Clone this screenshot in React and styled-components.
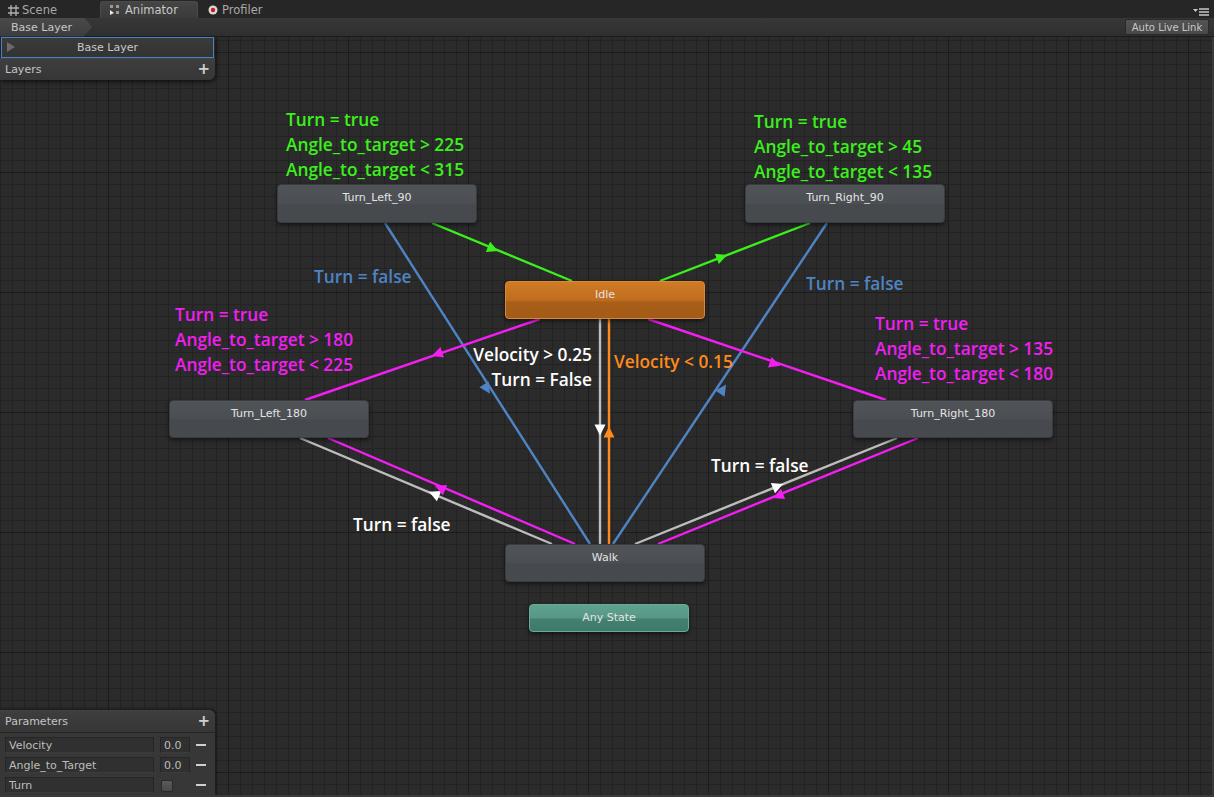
import React from "react"
import styled, { createGlobalStyle } from "styled-components"

const TOP = 37

const GlobalStyle = createGlobalStyle`
  html, body { margin: 0; padding: 0; background: #2a2a2a; overflow: hidden; }
  * { box-sizing: border-box; }
`

const Window = styled.div`
  width: 1214px;
  height: 797px;
  display: flex;
  flex-direction: column;
  font-family: "DejaVu Sans", Verdana, sans-serif;
  font-size: 11px;
  color: #c4c4c4;
`

const TabBar = styled.div`
  height: 18px;
  background: #262626;
  display: flex;
  align-items: flex-end;
  position: relative;
  padding-left: 4px;
`

const Tab = styled.div`
  height: 17px;
  width: ${p => p.$w}px;
  display: flex;
  align-items: center;
  gap: ${p => p.$gap}px;
  padding-left: ${p => p.$pad}px;
  color: ${p => (p.$active ? "#c8c8c8" : "#a8a8a8")};
  background: ${p => (p.$active ? "linear-gradient(#454545, #3a3a3a)" : "transparent")};
  border-radius: 3px 3px 0 0;
  border: 1px solid ${p => (p.$active ? "#4a4a4a" : "transparent")};
  border-bottom: none;
  font-size: 11.5px;
`

const MenuIcon = styled.div`
  position: absolute;
  right: 4px;
  top: 8px;
  display: flex;
  align-items: center;
  gap: 1px;
`

const Toolbar = styled.div`
  height: 19px;
  background: linear-gradient(#373737, #2f2f2f);
  border-bottom: 1px solid #1b1b1b;
  display: flex;
  align-items: center;
  justify-content: space-between;
`

const Crumb = styled.div`
  height: 19px;
  width: 92px;
  padding-left: 11px;
  display: flex;
  align-items: center;
  background: linear-gradient(#4a4a4a, #3c3c3c);
  clip-path: polygon(0 0, 84px 0, 92px 50%, 84px 100%, 0 100%);
  color: #c8c8c8;
`

const LiveLink = styled.div`
  height: 16px;
  width: 84px;
  margin-right: 5px;
  display: flex;
  align-items: center;
  justify-content: center;
  background: linear-gradient(#545454, #484848);
  border: 1px solid #2a2a2a;
  border-radius: 2px;
  color: #c8c8c8;
  font-size: 10px;
`

const Canvas = styled.div`
  flex: 1;
  position: relative;
  overflow: hidden;
  background-color: #2b2b2b;
  background-image:
    linear-gradient(to right, #1c1c1c 1px, transparent 1px),
    linear-gradient(to bottom, #1c1c1c 1px, transparent 1px),
    linear-gradient(to right, #232323 1px, transparent 1px),
    linear-gradient(to bottom, #232323 1px, transparent 1px);
  background-size: 120px 100%, 100% 120px, 12px 100%, 100% 12px;
  background-position: 108px 0, 0 15px, 0 0, 0 3px;
  border-right: 2px solid #3a3a3a;
  border-bottom: 2px solid #3a3a3a;
`

const Edges = styled.svg`
  position: absolute;
  left: 0;
  top: 0;
  width: 1214px;
  height: 760px;
`

const Node = styled.div`
  position: absolute;
  left: ${p => p.$x}px;
  top: ${p => p.$y - TOP}px;
  width: ${p => p.$w}px;
  height: ${p => p.$h}px;
  border-radius: 4px;
  border: 1px solid ${p => p.$border};
  background: ${p => p.$bg};
  box-shadow: 0 2px 4px rgba(0, 0, 0, 0.55);
  display: flex;
  justify-content: center;
  align-items: ${p => (p.$center ? "center" : "flex-start")};
  padding-top: ${p => (p.$center ? 0 : 6)}px;
  color: #e4e4e4;
  font-size: 11px;
  line-height: 14px;
`

const Label = styled.div`
  position: absolute;
  left: ${p => (p.$right ? "auto" : `${p.$x}px`)};
  right: ${p => (p.$right ? `${1214 - p.$x}px` : "auto")};
  top: ${p => p.$y - TOP}px;
  color: ${p => p.$color};
  font-family: "Open Sans", "Noto Sans", sans-serif;
  font-weight: 600;
  font-size: 17.3px;
  line-height: 25px;
  text-align: ${p => (p.$right ? "right" : "left")};
  white-space: nowrap;
`

const LayersPanel = styled.div`
  position: absolute;
  left: 0;
  top: 0;
  width: 215px;
  box-shadow: 1px 2px 4px rgba(0, 0, 0, 0.6);
  border-radius: 0 0 6px 0;
`

const ActiveLayer = styled.div`
  height: 21px;
  margin: 0 1px;
  border: 1px solid #4a80c4;
  background: linear-gradient(#3a3a3a, #333);
  display: flex;
  align-items: center;
  justify-content: center;
  position: relative;
  color: #c8c8c8;
`

const Triangle = styled.span`
  position: absolute;
  left: 5px;
  top: 4px;
  width: 0;
  height: 0;
  border-top: 5px solid transparent;
  border-bottom: 5px solid transparent;
  border-left: 8px solid #6a6a6a;
`

const PanelHeader = styled.div`
  height: ${p => p.$h}px;
  display: flex;
  align-items: center;
  justify-content: space-between;
  padding: 0 5px;
  background: linear-gradient(#3e3e3e, #363636);
  border-radius: ${p => p.$radius};
  border-top: 1px solid #444;
  color: #c4c4c4;
`

const Plus = styled.span`
  color: #d0d0d0;
  font-size: 15px;
  font-weight: bold;
  line-height: 1;
`

const ParamsPanel = styled.div`
  position: absolute;
  left: 0;
  bottom: 0;
  width: 215px;
  background: #373737;
  border-radius: 0 6px 0 0;
  box-shadow: 1px -1px 3px rgba(0, 0, 0, 0.5);
`

const ParamList = styled.div`
  border-top: 1px solid #262626;
  padding: 4px 0 2px 5px;
  display: flex;
  flex-direction: column;
  gap: 4px;
`

const ParamRow = styled.div`
  display: flex;
  align-items: center;
  height: 16px;
`

const Field = styled.div`
  width: ${p => p.$w}px;
  height: 16px;
  margin-right: ${p => p.$mr}px;
  background: #303030;
  border: 1px solid #262626;
  border-bottom-color: #3c3c3c;
  padding-left: 3px;
  display: flex;
  align-items: center;
  color: #bdbdbd;
`

const CheckBox = styled.div`
  width: 12px;
  height: 12px;
  margin: 2px 23px 0 1px;
  border-radius: 2px;
  background: linear-gradient(#5a5a5a, #4a4a4a);
  border: 1px solid #2a2a2a;
`

const CheckSlot = styled.div`
  width: 36px;
  display: flex;
`

const Minus = styled.div`
  width: 10px;
  height: 2px;
  background: #cfcfcf;
`

const GREEN = "#3cf01c"
const BLUE = "#4f84c4"
const MAG = "#f21ef2"
const GRAY = "#bdbdbd"
const ORANGE = "#ff8a1c"

const Arrow = ({ x, y, dx, dy, color }) => {
  const l = Math.hypot(dx, dy)
  const ux = dx / l
  const uy = dy / l
  const px = -uy
  const py = ux
  const s = 5.5
  const pts = [
    [x + ux * s, y + uy * s],
    [x - ux * s + px * s, y - uy * s + py * s],
    [x - ux * s - px * s, y - uy * s - py * s],
  ]
  return <polygon points={pts.map(p => p.join(",")).join(" ")} fill={color} />
}

const edges = [
  { a: [432, 223], b: [572, 281], c: GREEN, at: [493, 249], dir: 1 },
  { a: [660, 281], b: [810, 223], c: GREEN, at: [722, 257], dir: 1 },
  { a: [385, 223], b: [590, 544], c: BLUE, at: [487, 389], dir: 1 },
  { a: [613, 544], b: [827, 223], c: BLUE, at: [723, 389], dir: 1 },
  { a: [540, 319], b: [305, 400], c: MAG, at: [437, 354], dir: 1 },
  { a: [648, 319], b: [886, 400], c: MAG, at: [775, 364], dir: 1 },
  { a: [300, 438], b: [552, 544], c: GRAY, at: [434, 494], dir: -1, ac: "#ffffff" },
  { a: [328, 438], b: [575, 544], c: MAG, at: [440, 488], dir: -1 },
  { a: [635, 544], b: [897, 438], c: GRAY, at: [778, 486], dir: 1, ac: "#ffffff" },
  { a: [658, 544], b: [918, 438], c: MAG, at: [778, 496], dir: -1 },
  { a: [600, 319], b: [600, 544], c: GRAY, at: [600, 430], dir: 1, ac: "#ffffff" },
  { a: [609, 544], b: [609, 319], c: ORANGE, at: [609, 432], dir: 1 },
]

const nodeStyles = {
  normal: { bg: "linear-gradient(#505358 0%, #4b4e53 50%, #46494d 52%, #46494d 100%)", border: "#3a3c40" },
  idle: { bg: "linear-gradient(#cf7a25 0%, #c16d1e 50%, #a95f18 56%, #a35b17 100%)", border: "#d88a3a" },
  any: { bg: "linear-gradient(#5fa18f 0%, #579786 50%, #43806f 54%, #3e7a6b 100%)", border: "#6aab98" },
}

const nodes = [
  { name: "Turn_Left_90", x: 277, y: 184, w: 200, h: 39 },
  { name: "Turn_Right_90", x: 745, y: 184, w: 200, h: 39 },
  { name: "Idle", x: 505, y: 281, w: 200, h: 38, kind: "idle" },
  { name: "Turn_Left_180", x: 169, y: 400, w: 200, h: 38 },
  { name: "Turn_Right_180", x: 853, y: 400, w: 200, h: 38 },
  { name: "Walk", x: 505, y: 544, w: 200, h: 38 },
  { name: "Any State", x: 529, y: 604, w: 160, h: 28, kind: "any", center: true },
]

const labels = [
  { x: 286, y: 107, c: GREEN, lines: ["Turn = true", "Angle_to_target > 225", "Angle_to_target < 315"] },
  { x: 754, y: 109, c: GREEN, lines: ["Turn = true", "Angle_to_target > 45", "Angle_to_target < 135"] },
  { x: 314, y: 264, c: BLUE, lines: ["Turn = false"] },
  { x: 806, y: 271, c: BLUE, lines: ["Turn = false"] },
  { x: 175, y: 302, c: MAG, lines: ["Turn = true", "Angle_to_target > 180", "Angle_to_target < 225"] },
  { x: 875, y: 311, c: MAG, lines: ["Turn = true", "Angle_to_target > 135", "Angle_to_target < 180"] },
  { x: 594, y: 342, c: "#ffffff", right: true, lines: ["Velocity > 0.25", "Turn = False"] },
  { x: 614, y: 349, c: ORANGE, lines: ["Velocity < 0.15"] },
  { x: 711, y: 453, c: "#ffffff", lines: ["Turn = false"] },
  { x: 353, y: 512, c: "#ffffff", lines: ["Turn = false"] },
]

const params = [
  { name: "Velocity", value: "0.0" },
  { name: "Angle_to_Target", value: "0.0" },
  { name: "Turn", bool: true },
]

const SceneIcon = () => (
  <svg width="13" height="13" viewBox="0 0 13 13">
    <path d="M4 1v11M9 1v11M1 4h11M1 9h11" stroke="#b0b0b0" strokeWidth="1.3" />
  </svg>
)

const AnimatorIcon = () => (
  <svg width="12" height="12" viewBox="0 0 12 12">
    <rect x="1" y="1" width="3" height="3" fill="#9a9a9a" />
    <rect x="7" y="1" width="3" height="3" fill="#9a9a9a" />
    <rect x="7" y="7" width="3" height="3" fill="#9a9a9a" />
    <path d="M1 6l4 3-4 2z" fill="#e8e8e8" />
  </svg>
)

const ProfilerIcon = () => (
  <svg width="12" height="12" viewBox="0 0 12 12">
    <circle cx="6" cy="6" r="4.5" fill="#d8d8d8" />
    <circle cx="6" cy="6" r="2.2" fill="#c02020" />
  </svg>
)

const App = () => {
  return (
    <>
      <GlobalStyle />
      <Window>
        <TabBar>
          <Tab $w={96} $pad={2} $gap={2}>
            <SceneIcon />
            Scene
          </Tab>
          <Tab $w={98} $pad={8} $gap={4} $active>
            <AnimatorIcon />
            Animator
          </Tab>
          <Tab $w={90} $pad={8} $gap={3}>
            <ProfilerIcon />
            Profiler
          </Tab>
          <MenuIcon>
            <svg width="17" height="8" viewBox="0 0 17 8">
              <path d="M0 1h5l-2.5 3z" fill="#c8c8c8" />
              <path d="M6 1h10M6 4h10M6 7h10" stroke="#c8c8c8" strokeWidth="1.3" />
            </svg>
          </MenuIcon>
        </TabBar>
        <Toolbar>
          <Crumb>Base Layer</Crumb>
          <LiveLink>Auto Live Link</LiveLink>
        </Toolbar>
        <Canvas>
          <Edges viewBox={`0 ${TOP} 1214 760`}>
            {edges.map((e, i) => (
              <line key={i} x1={e.a[0]} y1={e.a[1]} x2={e.b[0]} y2={e.b[1]} stroke={e.c} strokeWidth="2.4" />
            ))}
            {edges.map((e, i) => (
              <Arrow
                key={"a" + i}
                x={e.at[0]}
                y={e.at[1]}
                dx={(e.b[0] - e.a[0]) * e.dir}
                dy={(e.b[1] - e.a[1]) * e.dir}
                color={e.ac || e.c}
              />
            ))}
          </Edges>

          {nodes.map(n => {
            const st = nodeStyles[n.kind || "normal"]
            return (
              <Node key={n.name} $x={n.x} $y={n.y} $w={n.w} $h={n.h} $bg={st.bg} $border={st.border} $center={n.center}>
                {n.name}
              </Node>
            )
          })}

          {labels.map((l, i) => (
            <Label key={i} $x={l.x} $y={l.y} $color={l.c} $right={l.right}>
              {l.lines.map(t => (
                <div key={t}>{t}</div>
              ))}
            </Label>
          ))}

          <LayersPanel>
            <ActiveLayer>
              <Triangle />
              Base Layer
            </ActiveLayer>
            <PanelHeader $h={22} $radius="0 0 6px 0">
              Layers
              <Plus>+</Plus>
            </PanelHeader>
          </LayersPanel>

          <ParamsPanel>
            <PanelHeader $h={22} $radius="0 6px 0 0">
              Parameters
              <Plus>+</Plus>
            </PanelHeader>
            <ParamList>
              {params.map(p => (
                <ParamRow key={p.name}>
                  <Field $w={149} $mr={6}>{p.name}</Field>
                  {p.bool ? (
                    <CheckSlot>
                      <CheckBox />
                    </CheckSlot>
                  ) : (
                    <Field $w={30} $mr={6}>{p.value}</Field>
                  )}
                  <Minus />
                </ParamRow>
              ))}
            </ParamList>
          </ParamsPanel>
        </Canvas>
      </Window>
    </>
  )
}

export default App
